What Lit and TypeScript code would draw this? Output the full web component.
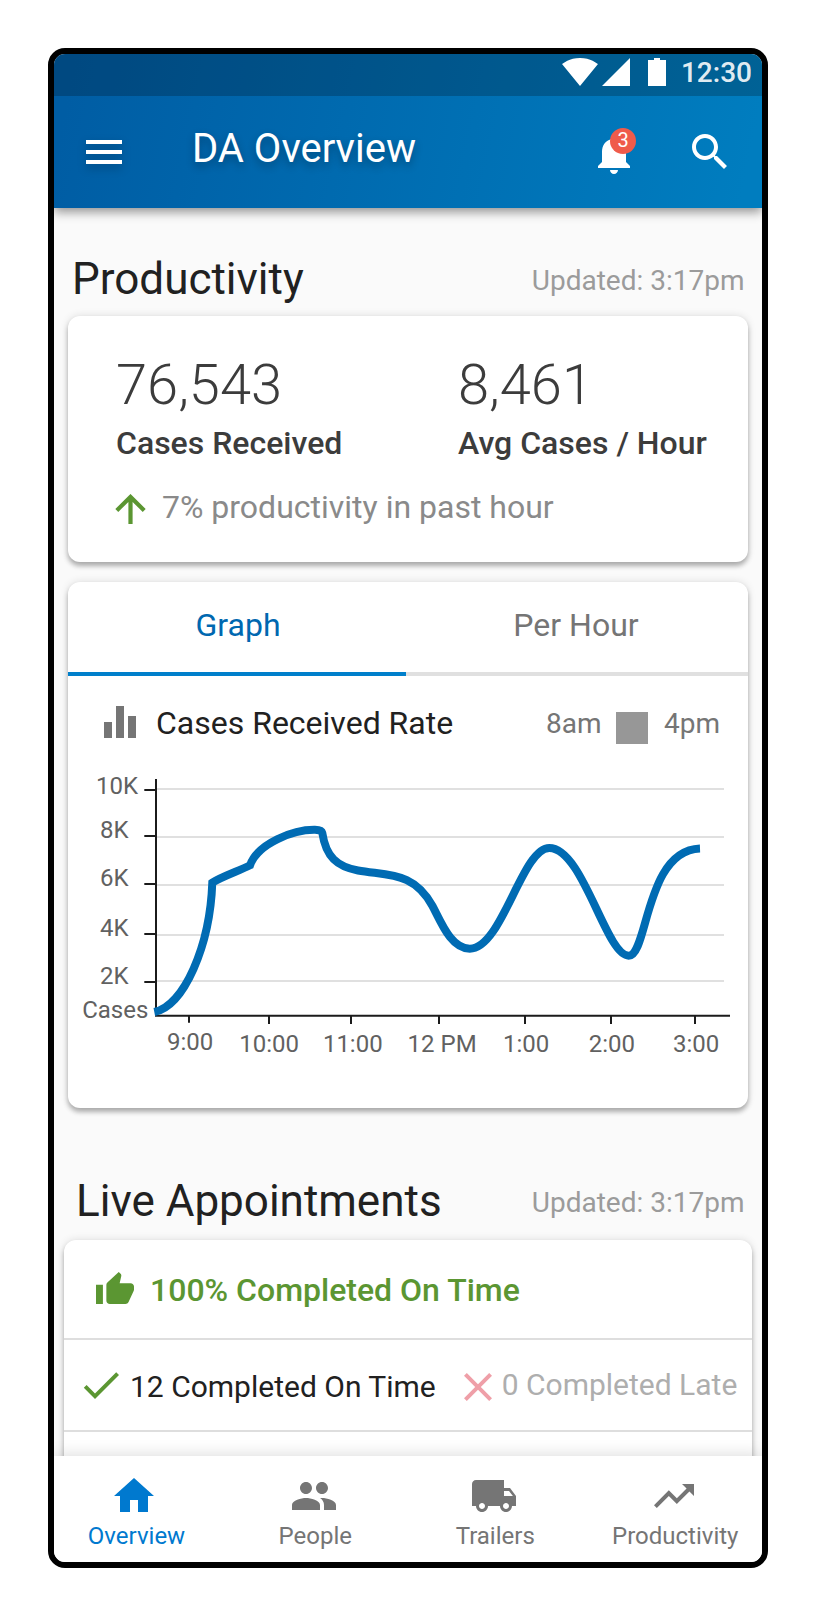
import { LitElement, html, svg, css } from "lit";
import { customElement, property } from "lit/decorators.js";
import { classMap } from "lit/directives/class-map.js";

@customElement("status-bar")
class StatusBar extends LitElement {
  static styles = css`
    :host { display: flex; align-items: flex-start; justify-content: flex-end; box-sizing: border-box; height: 42px; padding: 4px 10px 0 0; background: rgba(0, 0, 0, 0.21); }
    svg { display: block; fill: #fff; flex: none; }
    .signal { margin-left: 4px; }
    .battery { margin-left: 18px; }
    .time { margin-left: 15px; font-size: 28px; line-height: 30px; font-weight: 500; color: rgba(255, 255, 255, 0.9); }
  `;
  render() {
    return html`
      <svg width="36" height="28" viewBox="0.36 3 23.28 18.5" preserveAspectRatio="none"><path d="M12.01 21.49L23.64 7c-.45-.34-4.93-4-11.64-4C5.28 3 .81 6.66.36 7l11.63 14.49.01.01.01-.01z"/></svg>
      <svg class="signal" width="28" height="28" viewBox="0 0 28 28"><path d="M0 28H28V0z"/></svg>
      <svg class="battery" width="18" height="28" viewBox="0 0 18 28"><path d="M0 2H6V0H12V2H18V28H0z"/></svg>
      <span class="time">12:30</span>
    `;
  }
}

@customElement("title-bar")
class TitleBar extends LitElement {
  static styles = css`
    :host { display: flex; align-items: flex-start; box-sizing: border-box; height: 112px; padding: 32px 28px 0 26px; color: #fff; }
    svg { display: block; width: 48px; height: 48px; fill: #fff; }
    .menu { filter: drop-shadow(0 4px 4px rgba(0, 0, 0, 0.25)); }
    h1 { flex: 1; margin: -3px 0 0 64px; font-size: 40px; line-height: 48px; font-weight: 400; text-shadow: 0 4px 8px rgba(0, 0, 0, 0.3); }
    .alerts { position: relative; margin: 2px 48px 0 0; }
    .badge { position: absolute; left: 20px; top: -2px; width: 26px; height: 26px; border-radius: 50%; background: #ef5b4b; font-size: 20px; line-height: 24px; text-align: center; }
  `;
  render() {
    return html`
      <svg class="menu" viewBox="0 0 24 24"><path d="M3 18h18v-2H3v2zm0-5h18v-2H3v2zm0-7v2h18V6H3z"/></svg>
      <h1>DA Overview</h1>
      <div class="alerts">
        <svg viewBox="0 0 24 24"><path d="M12 22c1.1 0 2-.9 2-2h-4c0 1.1.89 2 2 2zm6-6v-5c0-3.07-1.64-5.64-4.5-6.32V4c0-.83-.67-1.5-1.5-1.5s-1.5.67-1.5 1.5v.68C7.63 5.36 6 7.92 6 11v5l-2 2v1h16v-1l-2-2z"/></svg>
        <span class="badge">3</span>
      </div>
      <svg viewBox="0 0 24 24"><path d="M15.5 14h-.79l-.28-.27C15.41 12.59 16 11.11 16 9.5 16 5.91 13.09 3 9.5 3S3 5.91 3 9.5 5.91 16 9.5 16c1.61 0 3.09-.59 4.23-1.57l.27.28v.79l5 4.99L20.49 19l-4.99-5zm-6 0C7.01 14 5 11.99 5 9.5S7.01 5 9.5 5 14 7.01 14 9.5 11.99 14 9.5 14z"/></svg>
    `;
  }
}

@customElement("section-heading")
class SectionHeading extends LitElement {
  @property() heading = "";
  @property() note = "";
  static styles = css`
    :host { display: flex; justify-content: space-between; align-items: flex-start; box-sizing: border-box; padding: 0 17.5px 0 18px; }
    h2 { margin: 0; font-size: 44px; line-height: 52px; font-weight: 400; color: #212121; }
    span { margin-top: 1.5px; font-size: 28px; line-height: 52px; color: #9b9b9b; }
  `;
  render() {
    return html`<h2>${this.heading}</h2><span>${this.note}</span>`;
  }
}

@customElement("rate-chart")
class RateChart extends LitElement {
  static styles = css`
    :host { display: block; }
    svg { display: block; }
    text { font-size: 24px; fill: #616161; }
    .grid { stroke: #e0e0e0; stroke-width: 2; }
    .axis { fill: none; stroke: #1b1b1b; stroke-width: 2; }
    .series { fill: none; stroke: #006bb3; stroke-width: 8; }
  `;
  yTicks = [
    { label: "10K", x: 96, base: 793.5, grid: 789, tick: 790 },
    { label: "8K", x: 100, base: 837.5, grid: 837, tick: 836 },
    { label: "6K", x: 100, base: 885.5, grid: 885, tick: 884 },
    { label: "4K", x: 100, base: 936, grid: 935, tick: 934 },
    { label: "2K", x: 100, base: 984, grid: 981, tick: 982 },
  ];
  xTicks = [
    { label: "9:00", x: 167, tick: 189, base: 1050, end: 1022.7 },
    { label: "10:00", x: 239.2, tick: 269, base: 1051.5, end: 1024 },
    { label: "11:00", x: 322.9, tick: 351, base: 1051.5, end: 1024 },
    { label: "12 PM", x: 407.6, tick: 439, base: 1051.5, end: 1024 },
    { label: "1:00", x: 502.9, tick: 525, base: 1051.5, end: 1024 },
    { label: "2:00", x: 588.7, tick: 611, base: 1051.5, end: 1024 },
    { label: "3:00", x: 672.9, tick: 695, base: 1051.5, end: 1024 },
  ];
  render() {
    return html`
      <svg width="680" height="352" viewBox="68 756 680 352">
        ${this.yTicks.map((t) => svg`
          <path class="grid" d="M157 ${t.grid}H724"/>
          <path class="axis" d="M144.3 ${t.tick}H155"/>
          <text x=${t.x} y=${t.base}>${t.label}</text>`)}
        <text x="82.2" y="1017.7">Cases</text>
        <path class="axis" d="M156 779V1015.7H730"/>
        ${this.xTicks.map((t) => svg`
          <path class="axis" d="M${t.tick} 1015.7V${t.end}"/>
          <text x=${t.x} y=${t.base}>${t.label}</text>`)}
        <path class="series" d="M154.3 1012C184 1006 210 946 212.3 882.7C222 876.5 240 870.5 250 865.3C258 843 294 829.5 315 829.8Q321.5 829.8 322.3 833C326 857 337 866.5 358 870.5C390 876 414 872 432.5 906C441 922 451 948.7 469.8 948.7C502 948.7 522 848 549.3 848C583 848 606 955.7 628.7 955.7C648 955.7 645 850.5 700 848.5"/>
      </svg>
    `;
  }
}

@customElement("bottom-nav")
class BottomNav extends LitElement {
  static styles = css`
    :host { display: flex; height: 106px; margin-top: auto; background: #fff; box-shadow: 0 -2px 14px rgba(0, 0, 0, 0.13); position: relative; font-size: 24px; color: #757575; }
    .item { flex: 0 0 180px; display: flex; flex-direction: column; align-items: center; padding-top: 16px; box-sizing: border-box; }
    .item:first-child { margin-left: -10px; }
    svg { display: block; width: 48px; height: 48px; fill: currentColor; flex: none; }
    .label { line-height: 28px; margin-top: 1.5px; padding-left: 2.5px; }
    .active { color: #0079cf; }
    .active .label { padding-left: 5px; }
  `;
  items = [
    { label: "Overview", active: true, d: "M10 20v-6h4v6h5v-8h3L12 3 2 12h3v8z" },
    { label: "People", active: false, d: "M16 11c1.66 0 2.99-1.34 2.99-3S17.66 5 16 5c-1.66 0-3 1.34-3 3s1.34 3 3 3zm-8 0c1.66 0 2.99-1.34 2.99-3S9.66 5 8 5C6.34 5 5 6.34 5 8s1.34 3 3 3zm0 2c-2.33 0-7 1.17-7 3.5V19h14v-2.5c0-2.33-4.67-3.5-7-3.5zm8 0c-.29 0-.62.02-.97.05 1.16.84 1.97 1.97 1.97 3.45V19h6v-2.5c0-2.33-4.67-3.5-7-3.5z" },
    { label: "Trailers", active: false, d: "M20 8h-3V4H3c-1.1 0-2 .9-2 2v11h2c0 1.66 1.34 3 3 3s3-1.34 3-3h6c0 1.66 1.34 3 3 3s3-1.34 3-3h2v-5l-3-4zM6 18.5c-.83 0-1.5-.67-1.5-1.5s.67-1.5 1.5-1.5 1.5.67 1.5 1.5-.67 1.5-1.5 1.5zm13.5-9l1.96 2.5H17V9.5h2.5zm-1.5 9c-.83 0-1.5-.67-1.5-1.5s.67-1.5 1.5-1.5 1.5.67 1.5 1.5-.67 1.5-1.5 1.5z" },
    { label: "Productivity", active: false, d: "M16 6l2.29 2.29-4.88 4.88-4-4L2 16.59 3.41 18l6-6 4 4 6.3-6.29L22 12V6z" },
  ];
  render() {
    return this.items.map((i) => html`
      <div class=${classMap({ item: true, active: i.active })}>
        <svg viewBox="0 0 24 24"><path d=${i.d}/></svg>
        <span class="label">${i.label}</span>
      </div>`);
  }
}

@customElement("app-root")
class AppRoot extends LitElement {
  static styles = css`
    :host { display: flex; justify-content: center; box-sizing: border-box; height: 1616px; padding-top: 48px; background: #fff; font-family: Roboto, sans-serif; }
    .phone { display: flex; flex-direction: column; box-sizing: border-box; width: 720px; height: 1520px; border: 6px solid #000; border-radius: 17px; overflow: hidden; background: #fafafa; }
    .top { position: relative; z-index: 1; flex: none; background: linear-gradient(102deg, #005da4 3%, #007dbf 97%); box-shadow: 0 4px 10px rgba(0, 0, 0, 0.42); }
    main { flex: none; height: 1248px; overflow: hidden; }
    .card { background: #fff; border-radius: 12px; margin: 0 14px; box-shadow: 0 4px 5px rgba(0, 0, 0, 0.28), 0 0 8px rgba(0, 0, 0, 0.12); }
    .first { margin-top: 45px; height: 63px; }
    .summary { box-sizing: border-box; height: 246px; padding: 37px 0 0 48px; }
    .figures { display: grid; grid-template-columns: 342px 1fr; }
    .value { font-size: 56px; line-height: 64px; font-weight: 300; color: #3c3c3c; }
    .caption { margin-top: 6px; font-size: 32px; line-height: 40px; font-weight: 500; color: #3c3c3c; white-space: nowrap; }
    .trend { display: flex; align-items: center; gap: 16px; margin: 24px 0 0 -1px; font-size: 32px; line-height: 40px; color: #8a8a8a; }
    .trend svg { display: block; margin-top: 4px; stroke: #5b9632; stroke-width: 4.2; fill: none; }
    .graph { height: 526px; margin-top: 20px; }
    .tabs { display: flex; height: 94px; font-size: 32px; line-height: 86px; text-align: center; color: #757575; }
    .tab { box-sizing: border-box; flex: 0 0 342px; padding-right: 2px; border-bottom: 4px solid #e0e0e0; }
    .tab.on { flex-basis: 338px; padding: 0 0 0 2px; border-color: #007fcb; color: #0068b0; }
    .legend { display: flex; align-items: flex-start; height: 80px; box-sizing: border-box; padding: 30px 28px 0 36px; font-size: 28px; line-height: 36px; color: #757575; }
    .legend svg { display: block; fill: #757575; }
    .legend h3 { flex: 1; margin: -3.5px 0 0 20px; font-size: 32px; line-height: 40px; font-weight: 400; color: #212121; }
    .legend .from, .legend .to { margin-top: -0.5px; }
    .swatch { width: 32px; height: 32px; margin: 6px 16px 0 14.5px; background: #979797; }
    .second { margin-top: 67px; height: 65px; padding-left: 22px; }
    .live { margin: 0 10px; height: 300px; }
    .row { display: flex; box-sizing: border-box; border-bottom: 2px solid #dedede; }
    .score { height: 100px; padding: 32px 0 0 32px; font-size: 32px; line-height: 40px; font-weight: 500; color: #5b9632; }
    .score svg { display: block; fill: #5b9632; margin-right: 16px; }
    .score span { margin-top: -2px; }
    .counts { height: 92px; padding: 21px 0 0 12.5px; font-size: 30px; line-height: 40px; color: #212121; }
    .counts svg { display: block; width: 48px; height: 48px; flex: none; }
    .done { fill: #5b9632; }
    .ontime { margin: 5.5px 0 0 5.5px; white-space: nowrap; }
    .close { fill: #ef9fa8; margin: 2px 0 0 18.5px; }
    .late { margin: 3.5px 0 0 -0.5px; color: #aeaeae; white-space: nowrap; }
  `;
  render() {
    return html`
      <div class="phone">
        <div class="top">
          <status-bar></status-bar>
          <title-bar></title-bar>
        </div>
        <main>
          <section-heading class="first" heading="Productivity" note="Updated: 3:17pm"></section-heading>
          <div class="card summary">
            <div class="figures">
              <div><div class="value">76,543</div><div class="caption">Cases Received</div></div>
              <div><div class="value">8,461</div><div class="caption">Avg Cases / Hour</div></div>
            </div>
            <div class="trend">
              <svg width="31" height="30" viewBox="0 0 31 30"><path d="M15.5 30V3M1.8 16.4L15.5 2.9L29.2 16.4"/></svg>
              <span>7% productivity in past hour</span>
            </div>
          </div>
          <div class="card graph">
            <div class="tabs"><div class="tab on">Graph</div><div class="tab">Per Hour</div></div>
            <div class="legend">
              <svg width="32" height="32" viewBox="0 0 32 32"><path d="M0 16H8V32H0zM12 0H20V32H12zM24 10H32V32H24z"/></svg>
              <h3>Cases Received Rate</h3>
              <span class="from">8am</span>
              <div class="swatch"></div>
              <span class="to">4pm</span>
            </div>
            <rate-chart></rate-chart>
          </div>
          <section-heading class="second" heading="Live Appointments" note="Updated: 3:17pm"></section-heading>
          <div class="card live">
            <div class="row score">
              <svg width="38" height="32" viewBox="1 1 22 20" preserveAspectRatio="none"><path d="M1 21h4V9H1v12zm22-11c0-1.1-.9-2-2-2h-6.31l.95-4.57.03-.32c0-.41-.17-.79-.44-1.06L14.17 1 7.59 7.59C7.22 7.95 7 8.45 7 9v10c0 1.1.9 2 2 2h9c.83 0 1.54-.5 1.84-1.22l3.02-7.05c.09-.23.14-.47.14-.73v-2z"/></svg>
              <span>100% Completed On Time</span>
            </div>
            <div class="row counts">
              <svg class="done" viewBox="0 0 24 24"><path d="M9 16.2L4.8 12l-1.4 1.4L9 19 21 7l-1.4-1.4L9 16.2z"/></svg>
              <span class="ontime">12 Completed On Time</span>
              <svg class="close" viewBox="0 0 24 24"><path d="M19 6.41L17.59 5 12 10.59 6.41 5 5 6.41 10.59 12 5 17.59 6.41 19 12 13.41 17.59 19 19 17.59 13.41 12z"/></svg>
              <span class="late">0 Completed Late</span>
            </div>
          </div>
        </main>
        <bottom-nav></bottom-nav>
      </div>
    `;
  }
}
